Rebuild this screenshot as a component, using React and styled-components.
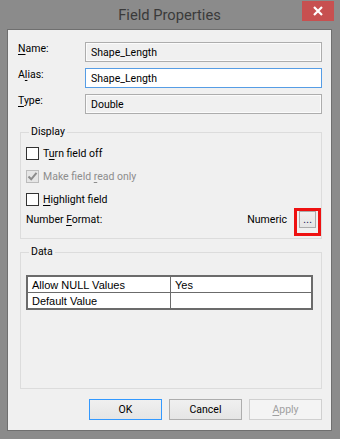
import React from 'react';
import styled, { createGlobalStyle } from 'styled-components';

const GlobalStyle = createGlobalStyle`
  html, body { margin: 0; padding: 0; }
  body {
    width: 340px; height: 439px; overflow: hidden;
    background: #8b8b8b;
    font-family: Roboto, "Liberation Sans", sans-serif;
    font-size: 10.5px;
    color: #000;
  }
  #root { width: 340px; height: 439px; }
`;

const Frame = styled.div`
  box-sizing: border-box;
  width: 340px;
  height: 439px;
  background: #8b8b8b;
  display: flex;
  flex-direction: column;
  padding: 0 8px 8px 7px;
`;

const TitleBar = styled.div`
  height: 29px;
  display: grid;
  grid-template-columns: 1fr auto 1fr;
  align-items: start;
`;

const Title = styled.div`
  grid-column: 2;
  font-size: 14.7px;
  line-height: 29px;
  color: #3a3a3a;
  padding-top: 1px;
`;

const CloseButton = styled.div`
  grid-column: 3;
  justify-self: end;
  width: 32px;
  height: 20px;
  margin: 1px -2px 0 0;
  background: #c75050;
  display: flex;
  align-items: center;
  justify-content: center;
`;

const Client = styled.div`
  flex: 1;
  border: 1px solid #6f6f6f;
  background: #f0f0f0;
  padding: 12px 9px 0 10px;
  display: flex;
  flex-direction: column;
`;

const FieldGrid = styled.div`
  display: grid;
  grid-template-columns: 67px 1fr;
  grid-auto-rows: 20px;
  row-gap: 6px;
  align-items: center;
`;

const Label = styled.label`
  align-self: start;
  line-height: 14px;
`;

const TextBox = styled.div`
  box-sizing: border-box;
  height: 20px;
  border: 1px solid ${p => (p.$focused ? '#569de5' : '#adadad')};
  background: ${p => (p.$readOnly ? '#f0f0f0' : '#fff')};
  box-shadow: ${p => (p.$readOnly ? 'inset 0 0 0 1px #fbfbfb' : 'none')};
  padding: 0 5px;
  display: flex;
  align-items: center;
  font-size: 10.5px;
`;

const Group = styled.fieldset`
  margin: ${p => p.$top}px 0 0 2px;
  padding: 0;
  border: 1px solid #dcdcdc;
  height: ${p => p.$height}px;
  box-sizing: border-box;
  min-width: 0;
`;

const Legend = styled.legend`
  margin-left: 8px;
  padding: 0 2px;
  line-height: 14px;
  color: #000;
`;

const GroupBody = styled.div`
  padding: ${p => p.$pad};
  display: flex;
  flex-direction: column;
`;

const CheckRow = styled.div`
  display: flex;
  align-items: center;
  gap: 4px;
  height: 23px;
  color: ${p => (p.$disabled ? '#8d8d8d' : '#000')};
`;

const Box = styled.span`
  box-sizing: border-box;
  width: 13px;
  height: 13px;
  border: 1px solid ${p => (p.$disabled ? '#bcbcbc' : '#333')};
  background: ${p => (p.$disabled ? '#e6e6e6' : '#fff')};
  display: flex;
  align-items: center;
  justify-content: center;
`;

const U = styled.span`
  text-decoration: underline;
  text-underline-offset: 2px;
`;

const FormatRow = styled.div`
  display: flex;
  align-items: flex-start;
  height: 28px;
  margin-top: -3px;
`;

const RowText = styled.span`
  line-height: 14px;
  margin-top: 5px;
`;

const Spacer = styled.div`
  flex: 1;
`;

const Highlight = styled.span`
  box-sizing: border-box;
  width: 27px;
  height: 28px;
  border: 3px solid #ee1111;
  margin-left: 7px;
  padding-left: 2px;
  display: flex;
  align-items: flex-start;
`;

const DotsButton = styled.span`
  box-sizing: border-box;
  width: 17px;
  height: 17px;
  border: 1px solid #acacac;
  background: linear-gradient(#f0f0f0, #e5e5e5);
  color: #262660;
  font-family: "Liberation Sans", Arial, sans-serif;
  font-size: 11px;
  display: flex;
  align-items: flex-end;
  justify-content: center;
  line-height: 1;
  padding-bottom: 2px;
`;

const Table = styled.table`
  border-collapse: collapse;
  width: 287px;
  border: 2px solid #6b6b6b;
  background: #fff;
  font-family: "Liberation Sans", Arial, sans-serif;
  font-size: 11px;
`;

const Cell = styled.td`
  border: 1px solid #6b6b6b;
  height: 15px;
  padding: 0 0 0 4px;
  line-height: 14px;
  width: ${p => p.$w || 'auto'};
`;

const ButtonBar = styled.div`
  display: flex;
  justify-content: flex-end;
  gap: 7px;
  margin-top: 10px;
`;

const Button = styled.div`
  box-sizing: border-box;
  width: 73px;
  height: 21px;
  border: 1px solid ${p => (p.$default ? '#3399ff' : p.$disabled ? '#d0d0d0' : '#adadad')};
  background: ${p => (p.$disabled ? '#f4f4f4' : 'linear-gradient(#f0f0f0, #e5e5e5)')};
  color: ${p => (p.$disabled ? '#a0a0a0' : '#000')};
  display: flex;
  align-items: center;
  justify-content: center;
  font-size: 10.5px;
`;

const Check = ({ color }) => (
  <svg width="11" height="11" viewBox="0 0 11 11">
    <path d="M1.5 5.5 L4.2 8.3 L9.5 1.8" fill="none" stroke={color} strokeWidth="2" />
  </svg>
);

export default function App() {
  return (
    <Frame>
      <GlobalStyle />
      <TitleBar>
        <Title>Field Properties</Title>
        <CloseButton>
          <svg width="10" height="10" viewBox="0 0 10 10">
            <path d="M1 1 L9 9 M9 1 L1 9" stroke="#fff" strokeWidth="2.2" />
          </svg>
        </CloseButton>
      </TitleBar>
      <Client>
        <FieldGrid>
          <Label><U>N</U>ame:</Label>
          <TextBox $readOnly>Shape_Length</TextBox>
          <Label>A<U>l</U>ias:</Label>
          <TextBox $focused>Shape_Length</TextBox>
          <Label><U>T</U>ype:</Label>
          <TextBox $readOnly>Double</TextBox>
        </FieldGrid>

        <Group $top={11} $height={114}>
          <Legend>Display</Legend>
          <GroupBody $pad="3px 0 0 5px">
            <CheckRow>
              <Box />
              <span>T<U>u</U>rn field off</span>
            </CheckRow>
            <CheckRow $disabled>
              <Box $disabled><Check color="#8c8c8c" /></Box>
              <span>Make field <U>r</U>ead only</span>
            </CheckRow>
            <CheckRow>
              <Box />
              <span><U>H</U>ighlight field</span>
            </CheckRow>
            <FormatRow>
              <RowText>Number <U>F</U>ormat:</RowText>
              <Spacer />
              <RowText>Numeric</RowText>
              <Highlight>
                <DotsButton>...</DotsButton>
              </Highlight>
            </FormatRow>
          </GroupBody>
        </Group>

        <Group $top={6} $height={144}>
          <Legend>Data</Legend>
          <GroupBody $pad="16px 0 0 5px">
            <Table>
              <tbody>
                <tr>
                  <Cell $w="138px">Allow NULL Values</Cell>
                  <Cell>Yes</Cell>
                </tr>
                <tr>
                  <Cell>Default Value</Cell>
                  <Cell />
                </tr>
              </tbody>
            </Table>
          </GroupBody>
        </Group>

        <ButtonBar>
          <Button $default>OK</Button>
          <Button>Cancel</Button>
          <Button $disabled><span><U>A</U>pply</span></Button>
        </ButtonBar>
      </Client>
    </Frame>
  );
}
